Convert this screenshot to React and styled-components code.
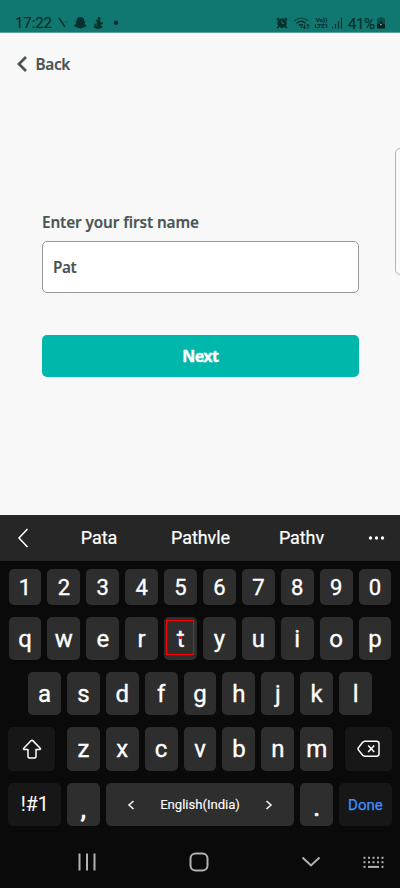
import React from "react";
import styled, { createGlobalStyle } from "styled-components";

const GlobalStyle = createGlobalStyle`
  *, *::before, *::after { box-sizing: border-box; }
  body { margin: 0; background: #f8f8f8; }
  button, input { font: inherit; letter-spacing: inherit; margin: 0; border: 0; }
  svg { display: block; flex: none; }
`;

const Screen = styled.div`
  position: relative;
  display: flex;
  flex-direction: column;
  width: 400px;
  height: 888px;
  overflow: hidden;
  background: #f8f8f8;
  font-family: "Noto Sans", sans-serif;
  color: #4a5553;
`;

const StatusBar = styled.header`
  display: flex;
  justify-content: space-between;
  height: 33px;
  padding: 13px 15px 0 15px;
  background: #117871;
  border-bottom: 1px solid #5ba19c;
  color: #06302d;
  font: 400 15px/20px Roboto, sans-serif;
`;

const StatusGroup = styled.div`
  display: flex;
  align-items: center;
  height: 20px;
`;

const Clock = styled.span`
  width: 37px;
  font-size: 15px;
  letter-spacing: -0.1px;
  -webkit-text-stroke: 0.2px;
`;

const Percent = styled.span`
  width: 27px;
  margin: 0 2px 0 5px;
  padding-top: 1px;
  font-size: 15px;
  letter-spacing: -0.4px;
  -webkit-text-stroke: 0.2px;
`;

const Network = styled.span`
  display: grid;
  grid-template-rows: 6px 6px;
  justify-items: center;
  width: 15px;
  margin: 0 2px 0 3px;
  font-size: 6.1px;
  font-weight: 700;
  line-height: 6px;
  -webkit-text-stroke: 0.15px;
`;

const Page = styled.main`
  display: flex;
  flex-direction: column;
  height: 482px;
`;

const BackButton = styled.button`
  display: flex;
  align-items: center;
  gap: 8px;
  align-self: flex-start;
  height: 24px;
  margin: 19px 0 0 15.5px;
  padding: 0;
  background: none;
  color: #4a5553;
  font-size: 15.3px;
  font-weight: 600;
  line-height: 22px;
  letter-spacing: -0.3px;
  -webkit-text-stroke: 0.15px;
`;

const BackText = styled.span`
  padding-bottom: 1px;
`;

const Form = styled.form`
  display: flex;
  flex-direction: column;
  margin: 135px 41.5px 0 42px;
`;

const Label = styled.label`
  height: 30px;
  font-size: 15.3px;
  font-weight: 600;
  line-height: 22px;
  letter-spacing: -0.1px;
  white-space: nowrap;
  -webkit-text-stroke: 0.15px;
`;

const NameInput = styled.input`
  width: 100%;
  height: 52px;
  padding: 0 10px;
  border: 1px solid #999;
  border-radius: 5px;
  outline: 0;
  background: #fff;
  color: #4a5553;
  font-size: 15.3px;
  font-weight: 600;
  letter-spacing: -0.4px;
  -webkit-text-stroke: 0.15px;
`;

const NextButton = styled.button`
  height: 42px;
  margin-top: 42px;
  padding: 0;
  border-radius: 5px;
  background: #00b7ac;
  color: #fff;
  font-size: 16px;
  font-weight: 700;
  line-height: 42px;
  letter-spacing: -0.6px;
  -webkit-text-stroke: 0.4px;
`;

const EdgeHandle = styled.div`
  position: absolute;
  top: 148px;
  left: 395px;
  width: 12px;
  height: 127px;
  border: 1px solid #b5b5b5;
  border-radius: 5px;
  background: #fafafa;
`;

const Keyboard = styled.section`
  display: flex;
  flex-direction: column;
  height: 373px;
  background: #0a0a0a;
  color: #fff;
  font-family: Roboto, sans-serif;
`;

const Suggestions = styled.div`
  display: grid;
  grid-template-columns: 48px 102px 101px 101px 48px;
  align-items: center;
  height: 46px;
  padding-bottom: 1px;
  background: #262626;
  font-size: 18px;
  text-align: center;
`;

const Suggestion = styled.span`
  letter-spacing: -0.1px;
  -webkit-text-stroke: 0.2px;
`;

const IconSlot = styled.span`
  display: flex;
  justify-content: center;
  padding-right: ${(p) => p.$inset || 0}px;
`;

const WifiSlot = styled(IconSlot)`
  margin-left: 5px;
`;

const Keys = styled.div`
  display: flex;
  flex-direction: column;
  gap: 12px;
  height: 266px;
  padding: 8px 8.4px 0;
`;

const Row = styled.div`
  display: flex;
  justify-content: center;
  gap: 6px;
  height: ${(p) => p.$height || 43}px;
`;

const Key = styled.button`
  display: flex;
  align-items: center;
  justify-content: center;
  flex: none;
  position: relative;
  width: ${(p) => p.$width || 32.9}px;
  margin-right: ${(p) => p.$after || 0}px;
  margin-left: ${(p) => p.$before || 0}px;
  padding: ${(p) => p.$drop || 0}px 0 0;
  border-radius: 5px;
  background: ${(p) => (p.$dark ? "#171717" : "#2e2e2e")};
  color: ${(p) => p.$color || "#fff"};
  font-size: ${(p) => p.$size || 24}px;
  line-height: 28px;
  -webkit-text-stroke: ${(p) => p.$weight ?? 0.35}px;
`;

const SpaceKey = styled(Key)`
  justify-content: space-between;
  padding: 0 21px;
  font-size: 13.2px;
  letter-spacing: -0.05px;
  -webkit-text-stroke: 0.1px;
`;

const TouchFrame = styled.span`
  position: absolute;
  top: 3px;
  left: 2px;
  width: 28px;
  height: 35px;
  border: 1px solid #f00;
`;

const TouchPoint = styled.span`
  position: absolute;
  top: 19px;
  left: 15px;
  width: 3px;
  height: 3px;
  border-radius: 1px;
  background: #f00;
`;

const NavBar = styled.nav`
  display: grid;
  grid-template-columns: 174px 50px 126px 48px;
  align-items: center;
  height: 61px;
  padding-top: 9px;
  color: #b2b2b2;
`;

const NavSlot = styled.span`
  display: flex;
  justify-content: center;
  padding-left: ${(p) => p.$shift || 0}px;
`;

const Chevron = ({ w, h, d, stroke = 1.5 }) => (
  <svg width={w} height={h} viewBox={`0 0 ${w} ${h}`} fill="none" stroke="currentColor" strokeWidth={stroke}>
    <path d={d} />
  </svg>
);

const NotificationIcons = () => (
  <svg width="72" height="14" viewBox="52 16 72 14" fill="currentColor">
    <path d="M59 18l6 9" stroke="currentColor" strokeWidth="1.4" />
    <path d="M65 22h3" stroke="currentColor" strokeWidth=".8" opacity=".45" />
    <path d="M80.300 17c2.700 0 4 1.600 3.900 4.200l1.600.5-1.400 1.200c.5 1.300 1.200 2 2.100 2.300v1.200l-2.300.4-.5 1-1.800-.1-1.600.8-1.600-.8-1.800.1-.5-1-2.300-.4v-1.200c1.100-.3 1.800-1 2.300-2.300l-1.400-1.200 1.600-.5c-.1-2.600 1-4.200 3.700-4.200z" />
    <path d="M98.500 17l1.800 1-.8 2.200.8 2.500h2.700l-.8 1.300-1.600.1.1 2.400h1.900c-1 1.500-2.500 2-4.600 2-2.300 0-3.700-.7-4.400-2.200l1.800.2-.8-2.600 1.800.5 1.100-2-1.500-2 1.800-.2z" stroke="currentColor" strokeWidth=".7" />
    <path d="M97 22.500l-.5 3 1.500.4" fill="none" stroke="#117871" strokeWidth=".7" opacity=".6" />
    <circle cx="116" cy="22.800" r="2.300" />
  </svg>
);

const AlarmIcon = () => (
  <svg width="12" height="12" viewBox="0 0 12 12">
    <path d="M1 3.200L3 1M11 3.200L9 1M2.500 9.500L1.300 11M9.500 9.500l1.200 1.500" stroke="currentColor" strokeWidth="2" />
    <circle cx="6" cy="6.200" r="4.700" fill="currentColor" />
    <path d="M6 3.400v3h2.200" fill="none" stroke="#117871" />
  </svg>
);

const WifiIcon = () => (
  <svg width="18" height="13" viewBox="0 0 18 13" fill="none" stroke="currentColor">
    <path d="M1 4c4.500-3.800 10-3.800 14 0" strokeWidth="1.200" opacity=".65" />
    <path d="M3.500 6.400c3-2.700 6.500-2.700 9.300 0M5.800 8.500c1.500-1.300 3-1.300 4.500 0" strokeWidth="1.300" />
    <path d="M7 9.500h3l-1.500 1.700z" fill="currentColor" stroke="none" />
    <path d="M11.500 7.500v4M10 10l1.500 1.700L13 10M15 11.500V7.500M13.500 9L15 7.300l1.500 1.700" strokeWidth="1" />
  </svg>
);

const SignalIcon = () => (
  <svg width="12" height="12" viewBox="0 0 12 12" stroke="currentColor" strokeWidth="1.200">
    <path d="M1.500 11.500v-2M4.500 11.500V7M7.500 11.500V4M10.500 11.500V.8" />
  </svg>
);

const BatteryIcon = () => (
  <svg width="8" height="12" viewBox="0 0 8 12">
    <path d="M2.500 0h3v1H7q1 0 1 1v8.500H0V2q0-1 1-1h1.500z" fill="#0b514c" />
    <path d="M0 7h8v3.700q0 .8-.8.800H.8Q0 11.500 0 10.700z" fill="#06211f" />
    <path d="M4.500 2.800L2 6.400h1.800V9.300L6.300 5.600H4.500z" fill="#06302d" />
    <path d="M3.400 7h1.500L3.600 9z" fill="#ccefea" />
  </svg>
);

const ShiftIcon = () => (
  <svg width="20" height="21" viewBox="0 0 20 21" fill="none" stroke="currentColor" strokeWidth="1.500" strokeLinejoin="round">
    <path d="M9.200 1.600Q10 .8 10.800 1.600L18.200 9.200Q19 10.500 17.500 10.500H14V17.500Q14 19 12.500 19H7.500Q6 19 6 17.500V10.500H2.500Q1 10.500 1.800 9.200Z" />
  </svg>
);

const BackspaceIcon = () => (
  <svg width="23" height="18" viewBox="0 0 23 18" fill="none" stroke="currentColor" strokeWidth="1.500" strokeLinejoin="round">
    <path d="M7.500 1.300H19.500Q22 1.300 22 3.800V13.700Q22 16.200 19.500 16.200H7.500L5.700 15.300L1.400 9.900Q.7 8.800 1.400 7.700L5.700 2.200Z" />
    <path d="M11.200 5.500l6 6.400M17.200 5.500l-6 6.400" />
  </svg>
);

const KeyboardIcon = () => (
  <svg width="22" height="13" viewBox="0 0 22 13" fill="currentColor">
    {[0, 4.5, 9, 13.5, 18].map((x) => (
      <React.Fragment key={x}>
        <rect x={x + 0.5} y="0.800" width="2" height="2" />
        <rect x={x + 0.5} y="5.200" width="2" height="2" />
      </React.Fragment>
    ))}
    <rect x=".5" y="9.900" width="2" height="2" />
    <rect x="5" y="9.900" width="11" height="2" />
    <rect x="18.500" y="9.900" width="2" height="2" />
  </svg>
);

export default function App() {
  return (
    <Screen>
      <GlobalStyle />
      <StatusBar>
        <StatusGroup>
          <Clock>17:22</Clock>
          <NotificationIcons />
        </StatusGroup>
        <StatusGroup>
          <AlarmIcon />
          <WifiSlot><WifiIcon /></WifiSlot>
          <Network><span>Vo))</span><span>LTE1</span></Network>
          <SignalIcon />
          <Percent>41%</Percent>
          <BatteryIcon />
        </StatusGroup>
      </StatusBar>

      <Page>
        <BackButton>
          <Chevron w={12} h={18} d="M10 2L3 9l7 7" stroke={2.8} />
          <BackText>Back</BackText>
        </BackButton>
        <Form onSubmit={(e) => e.preventDefault()}>
          <Label htmlFor="first-name">Enter your first name</Label>
          <NameInput id="first-name" defaultValue="Pat" />
          <NextButton>Next</NextButton>
        </Form>
      </Page>
      <EdgeHandle />

      <Keyboard>
        <Suggestions>
          <IconSlot $inset={2}><Chevron w={12} h={20} d="M10.500 1L2 10l8.500 9" /></IconSlot>
          <Suggestion>Pata</Suggestion>
          <Suggestion>Pathvle</Suggestion>
          <Suggestion>Pathv</Suggestion>
          <IconSlot>
            <svg width="17" height="4" viewBox="0 0 17 4" fill="currentColor">
              <circle cx="2.500" cy="2" r="1.700" /><circle cx="8.500" cy="2" r="1.700" /><circle cx="14.500" cy="2" r="1.700" />
            </svg>
          </IconSlot>
        </Suggestions>

        <Keys>
          <Row $height={36}>
            {[..."1234567890"].map((k) => <Key key={k} $size={22} $drop={1}>{k}</Key>)}
          </Row>
          <Row>
            {[..."qwertyuiop"].map((k) => (
              <Key key={k}>
                {k}
                {k === "t" && <><TouchFrame /><TouchPoint /></>}
              </Key>
            ))}
          </Row>
          <Row>
            {[..."asdfghjkl"].map((k) => <Key key={k}>{k}</Key>)}
          </Row>
          <Row $height={44}>
            <Key $dark $width={46.6} $after={6}><ShiftIcon /></Key>
            {[..."zxcvbnm"].map((k) => <Key key={k}>{k}</Key>)}
            <Key $dark $width={46.6} $before={6}><BackspaceIcon /></Key>
          </Row>
          <Row>
            <Key $dark $weight={0} $width={52.6} $size={19.5} $drop={1}>!#1</Key>
            <Key $drop={9} $size={26} $weight={0.7}>,</Key>
            <SpaceKey $width={188.4}>
              <Chevron w={8} h={10} d="M6.500 1L2 5l4.500 4" />
              English(India)
              <Chevron w={8} h={10} d="M1.500 1L6 5L1.500 9" />
            </SpaceKey>
            <Key $drop={4} $size={26} $weight={0.7}>.</Key>
            <Key $dark $weight={0.25} $width={52.6} $size={15} $color="#3e91ff">Done</Key>
          </Row>
        </Keys>

        <NavBar>
          <NavSlot><Chevron w={18} h={18} d="M1.500 .5v17M9 .5v17M16.500 .5v17" stroke={2} /></NavSlot>
          <NavSlot>
            <svg width="20" height="20" viewBox="0 0 20 20" fill="none" stroke="currentColor" strokeWidth="2">
              <rect x="1.500" y="1.500" width="17" height="17" rx="5" />
            </svg>
          </NavSlot>
          <NavSlot $shift={48}><Chevron w={20} h={12} d="M1.500 1.500L10 9.500L18.500 1.500" stroke={2} /></NavSlot>
          <NavSlot><KeyboardIcon /></NavSlot>
        </NavBar>
      </Keyboard>
    </Screen>
  );
}
